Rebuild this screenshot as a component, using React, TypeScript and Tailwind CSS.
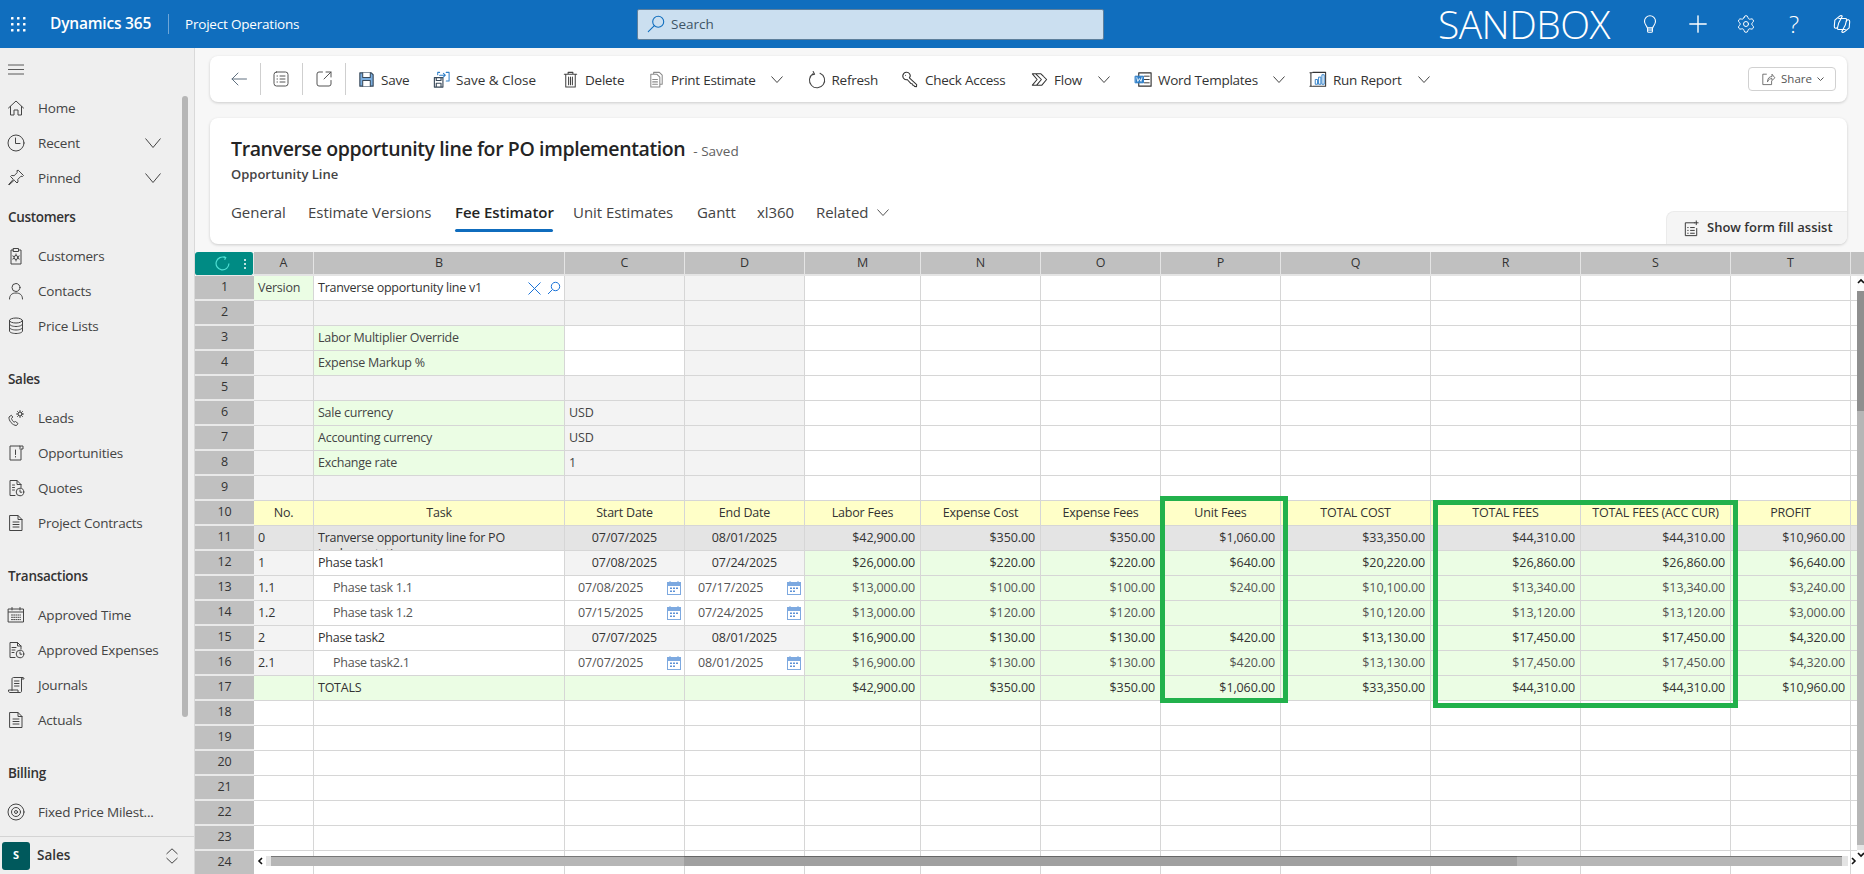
import type { ReactNode } from "react"
import { Plus, Settings } from "lucide-react"

const FONT = "font-['Open_Sans','Liberation_Sans',sans-serif]"

function I({ children, s = 20, cls = "" }: { children: ReactNode; s?: number; cls?: string }) {
    return (
        <svg width={s} height={s} viewBox="0 0 20 20" fill="none" stroke="currentColor" strokeWidth={1} strokeLinecap="round" strokeLinejoin="round" className={`shrink-0 ${cls}`}>
            {children}
        </svg>
    )
}

function Chev({ w = 12, cls = "" }: { w?: number; cls?: string }) {
    const h = Math.round(w * 0.6)
    return (
        <svg width={w} height={h} viewBox={`0 0 ${w} ${h}`} fill="none" stroke="currentColor" strokeWidth={1} className={`shrink-0 ${cls}`}>
            <path d={`M0.5 0.5L${w / 2} ${h - 0.5}L${w - 0.5} 0.5`} />
        </svg>
    )
}

const docLines = (
    <>
        <path d="M4 2.5h8l4 4v11H4z" />
        <path d="M12 2.5v4h4M7 9h6M7 11.5h6M7 14h6" />
    </>
)

const NAV_ICONS: Record<string, ReactNode> = {
    Home: <path d="M2.5 10 10 3l7.5 7M4.5 8.5V17H8v-5h4v5h3.500V8.500" />,
    Recent: (
        <>
            <circle cx="10" cy="10" r="8" />
            <path d="M9.5 5v5.5H14" />
        </>
    ),
    Pinned: <path d="M12.5 2.5 17.5 7.5l-1 1-1.500-.3-3.200 3.200.2 2.600-1 1-2.800-2.800L3 17l-.4-.4 4.700-5.300-2.800-2.800 1-1 2.600.2 3.200-3.200-.3-1.500z" />,
    Customers: (
        <>
            <path d="M7.5 4H5v14h10V4h-2.500M7.500 2.500h5v3h-5z" />
            <circle cx="10" cy="11.5" r="2" />
            <path d="M10 8v1.500M10 13.500V15M6.800 10l1.400.7M11.800 12.300l1.400.7M6.800 13l1.400-.7M11.800 10.700l1.400-.7" />
        </>
    ),
    Contacts: (
        <>
            <circle cx="10" cy="6.500" r="4" />
            <path d="M3.500 18c0-4 2.500-6 6.500-6s6.500 2 6.500 6" />
        </>
    ),
    "Price Lists": (
        <>
            <ellipse cx="10" cy="4.500" rx="6.500" ry="2.500" />
            <path d="M3.500 4.500V15c0 1.400 3 2.500 6.500 2.500s6.500-1.100 6.500-2.500V4.500M3.500 8c0 1.400 3 2.500 6.500 2.500S16.500 9.400 16.500 8M3.500 11.500c0 1.400 3 2.500 6.500 2.500s6.500-1.100 6.500-2.500" />
        </>
    ),
    Leads: (
        <>
            <path d="M5 7.500 3 9c-.5 3.500 3.500 8.500 7.500 8.500l1.500-2-2.500-2-1.500.7c-1-.7-2.200-2.400-2.500-3.700l1-1.200z" />
            <circle cx="14" cy="6" r="2" />
            <path d="M14 2.500V4M14 8v1.500M10.500 6H12M16 6h1.500M11.500 3.500l1 1M15.500 7.500l1 1M11.500 8.500l1-1M15.500 4.500l1-1" />
        </>
    ),
    Opportunities: <path d="M14 6V3H4v14h11V6h2V3h-3M9.500 7v4.500M9.500 13.500v.5" />,
    Quotes: (
        <>
            <path d="M9 17.500H4v-15h7l4 4v3M11 2.500v4h4M6.500 7h2M6.500 9.500h2M6.500 12h2" />
            <circle cx="14" cy="14" r="3.800" />
            <path d="M14 12v2.200h1.800" />
        </>
    ),
    "Project Contracts": docLines,
    "Approved Time": (
        <>
            <path d="M2.500 4h15v13h-15zM2.500 7h15M6 2.500V5M14 2.500V5" />
            <path strokeDasharray="1 1.200" d="M5.500 10h9M5.500 12.300h9M5.500 14.600h9" />
        </>
    ),
    "Approved Expenses": (
        <>
            <path d="M9 17.500H4v-15h7.500L15 6v3M11.500 2.500V6H15M6 7.500h4M6 10h3M6 12.500h2" />
            <circle cx="14" cy="14" r="3.800" />
            <path d="M14 12v2.200h1.800" />
        </>
    ),
    Journals: <path d="M6 15.500V4c0-1 .8-1.500 1.500-1.500H17c-.8 0-1.500.6-1.500 1.500v12.500c0 .6-.7 1-1.500 1H4c-1 0-1.500-.7-1.500-1.500v-1H12V17c0 .3.500.5 1 .5M17 2.500c.7 0 1 .5 1 1.500h-2.500M8.500 6H13M8.500 8.500H13M8.500 11H13" />,
    Actuals: docLines,
    "Fixed Price Milest...": (
        <>
            <circle cx="10" cy="10" r="8" />
            <circle cx="10" cy="10" r="4.500" />
            <circle cx="10" cy="10" r="1.500" />
        </>
    ),
}

const NAV: { heading?: string; mt?: string; items: string[] }[] = [
    { items: ["Home", "Recent", "Pinned"] },
    { heading: "Customers", mt: "mt-1", items: ["Customers", "Contacts", "Price Lists"] },
    { heading: "Sales", mt: "mt-[18px]", items: ["Leads", "Opportunities", "Quotes", "Project Contracts"] },
    { heading: "Transactions", mt: "mt-[18px]", items: ["Approved Time", "Approved Expenses", "Journals", "Actuals"] },
    { heading: "Billing", mt: "mt-[18px]", items: ["Fixed Price Milest..."] },
]

function TopBar() {
    return (
        <header className="flex items-center h-12 shrink-0 bg-[#106ebe] text-white">
            <svg width="16" height="16" viewBox="0 0 16 16" fill="white" className="ml-[10px] shrink-0">
                {[1, 7, 13].flatMap((y) => [1, 7, 13].map((x) => <rect key={`${x}-${y}`} x={x} y={y} width="2.5" height="2.5" rx="0.5" />))}
            </svg>
            <span className="ml-[24px] w-[102px] text-[15.5px] font-semibold tracking-[-0.2px]">Dynamics 365</span>
            <span className="ml-[16px] w-px h-5 bg-[#6ea6d8]" />
            <span className="ml-[16px] w-[452px] text-[13.5px] tracking-[-0.2px]">Project Operations</span>
            <div className="flex items-center w-[467px] h-[31px] bg-[#cbdff0] border border-[#5d7f9c] rounded-[2px] pl-[7px] gap-[4px] text-[#3d5466]">
                <I s={22} cls="text-[#106ebe]">
                    <circle cx="12" cy="8" r="5" />
                    <path d="M8.500 11.500 3 17" />
                </I>
                <span className="text-[13.5px]">Search</span>
            </div>
            <span className="ml-auto mr-[16px] text-[39px] font-light leading-[48px] tracking-[-0.5px]">SANDBOX</span>
            <div className="flex items-center -mr-[2px]">
                <span className="w-[48px] flex justify-center">
                    <I s={22}>
                        <path d="M7.500 13.500C7 11.500 5 10.500 5 7.500a5 5 0 0 1 10 0c0 3-2 4-2.500 6zM7.800 13.500v3c0 .6.500 1 1 1h2.400c.5 0 1-.4 1-1v-3M8 15.500h4" />
                    </I>
                </span>
                <span className="w-[48px] flex justify-center">
                    <Plus size={28} strokeWidth={1.2} />
                </span>
                <span className="w-[48px] flex justify-center">
                    <Settings size={20} strokeWidth={1.2} />
                </span>
                <span className="w-[48px] flex justify-center text-[24px] font-light leading-none">?</span>
                <span className="w-[48px] flex justify-center">
                    <I s={22}>
                        <path d="M7 3.500 3.500 6.500 3 12c-.2 2 2 2.500 3 1l1-4 3-5.500c.6-1-.7-1.200-1.500-1zM13 16.500l3.500-3L17 8c.2-2-2-2.500-3-1l-1 4-3 5.500c-.6 1 .7 1.200 1.500 1z" />
                        <path d="M7 5h6c1.500 0 1.500 1.500 1 2.500M13 15H7c-1.500 0-1.500-1.500-1-2" />
                    </I>
                </span>
            </div>
        </header>
    )
}

function Sidebar() {
    return (
        <aside className="relative flex flex-col w-[195px] shrink-0 bg-[#efefef] border-r border-[#d9d9d9] text-[#444444]">
            <div className="flex items-center h-[42.5px] shrink-0 pl-[8px] text-[#333333]">
                <svg width="16" height="11" viewBox="0 0 16 11" stroke="currentColor" strokeWidth="0.8" className="shrink-0">
                    <path d="M0 1h16M0 5.500h16M0 10h16" />
                </svg>
            </div>
            <nav className="flex-1 min-h-0 overflow-hidden">
                {NAV.map((s) => (
                    <div key={s.items[0]} className={s.mt}>
                        {s.heading && <div className="h-[35px] mb-1 pl-[8px] flex items-center text-[13.5px] font-semibold text-[#333333] tracking-[-0.3px]">{s.heading}</div>}
                        {s.items.map((it) => (
                            <div key={it} className="flex items-center h-[35px] pl-[6px] gap-[12px]">
                                <I>{NAV_ICONS[it]}</I>
                                <span className="text-[13.5px] tracking-[-0.2px] whitespace-nowrap">{it}</span>
                                {(it === "Recent" || it === "Pinned") && <Chev w={16} cls="absolute left-[145px]" />}
                            </div>
                        ))}
                    </div>
                ))}
            </nav>
            <div className="flex items-center h-[38px] shrink-0 border-t border-[#d4d4d4] pl-[2px]">
                <span className="w-[28px] h-[28px] rounded-[3px] bg-[#00595c] text-white text-[11px] font-bold flex items-center justify-center">S</span>
                <span className="ml-[7px] text-[13.5px] font-semibold text-[#333333]">Sales</span>
                <svg width="12" height="16" viewBox="0 0 12 16" fill="none" stroke="currentColor" strokeWidth="1" className="ml-auto mr-[16px] shrink-0">
                    <path d="M0.5 6 6 0.8 11.500 6M0.5 10 6 15.200 11.500 10" />
                </svg>
            </div>
            <div className="absolute left-[182px] top-[48px] w-[6px] h-[621px] rounded-full bg-[#b6b6b6]" />
        </aside>
    )
}

const TOOLS: { icon: ReactNode; label: string; w: string; chevron?: boolean; ml: string; track?: string }[] = [
    {
        label: "Save",
        w: "w-[28px]",
        ml: "ml-[11px]",
        icon: (
            <>
                <path d="M3 3h12l2 2v12H3z" fill="#7aaee0" stroke="#3a4a5a" strokeWidth="1.2" />
                <path d="M6 3v5h8V3M6 17v-6h8v6" fill="#fff" stroke="#3a4a5a" strokeWidth="1.1" />
            </>
        ),
    },
    {
        label: "Save & Close",
        w: "w-[80px]",
        ml: "ml-[22.5px]",
        track: "tracking-[0px]",
        icon: (
            <>
                <path d="M2.500 8h9v10h-9zM4.500 8v3h5V8M4.500 18v-4h5v4" stroke="#3a4a5a" strokeWidth="1.2" />
                <path d="M6 5V2.500h2M15 2.500h3v9h-3M8 5.500h6M12 3.500l2 2-2 2" stroke="#2f7fc8" strokeWidth="1.1" />
            </>
        ),
    },
    {
        label: "Delete",
        w: "w-[41px]",
        ml: "ml-[24.5px]",
        icon: <path d="M3.500 4.500h13M7.500 4.500v-2h5v2M5 4.500V18h10V4.500M8 7.500v8M10 7.500v8M12 7.500v8" stroke="#444" strokeWidth="1.1" />,
    },
    {
        label: "Print Estimate",
        w: "w-[84px]",
        ml: "ml-[20.5px]",
        chevron: true,
        icon: <path d="M7 4V2.500h6l3 3V15h-2.500M4 4.500h6.500l3 3V18H4zM6 10h5M6 12.500h5M6 15h5" stroke="#8a8a8a" strokeWidth="1.1" />,
    },
    {
        label: "Refresh",
        w: "w-[45px]",
        ml: "ml-[22px]",
        icon: <path d="M6.500 1.500 8 4.500 5.200 5.200M6.300 4a8 8 0 1 0 7.400-.6" stroke="#444" strokeWidth="1.1" />,
    },
    {
        label: "Check Access",
        w: "w-[83px]",
        ml: "ml-[24px]",
        icon: <path d="M3 3.500c1.500-1.500 4.500-1.500 6 .5 1 1.400 1 3-.2 4.200l7.700 7.300-.2 2-2-.2-1-1.300-1.300-.2-.2-1.300-1.300-.2L6.500 10c-1.500.5-3 0-4-1.500-.8-1.500-.6-3.800.5-5zM4.800 5.500v.1" stroke="#333" strokeWidth="1.1" />,
    },
    {
        label: "Flow",
        w: "w-[28px]",
        ml: "ml-[21.5px]",
        chevron: true,
        icon: <path d="M2.500 4h9l6 6-5 6h-10l5-6zM6 4l6 6-5 6M11.500 4 14 6.500" stroke="#333" strokeWidth="1.1" />,
    },
    {
        label: "Word Templates",
        w: "w-[99px]",
        ml: "ml-[21.5px]",
        chevron: true,
        icon: (
            <>
                <path d="M5 3h13v14H5z" stroke="#333" strokeWidth="1.2" />
                <path d="M11 6.500h5M11 10h5M11 13.500h5" stroke="#333" />
                <path d="M1.500 6.500H10v7H1.500z" fill="#2f7fc8" stroke="#2f7fc8" />
                <path d="M3 8l1 4 1.700-3 1.700 3 1-4" stroke="#fff" strokeWidth="0.9" />
            </>
        ),
    },
    {
        label: "Run Report",
        w: "w-[69px]",
        ml: "ml-[21.5px]",
        chevron: true,
        icon: (
            <>
                <path d="M4 2.500h13.500V17H4M2 3v14M1 3h2M1 17h2" stroke="#333" strokeWidth="1.1" />
                <path d="M7 10h2v5H7zM10.500 7.500h2V15h-2zM14 5h2v10h-2z" stroke="#2f7fc8" />
            </>
        ),
    },
]

function Seg({ children }: { children: ReactNode }) {
    return <span className="flex items-center justify-center w-[42.5px] h-[32px] border-r border-[#cfcfcf] text-[#555555]">{children}</span>
}

function CommandBar() {
    return (
        <div className="flex items-center h-[46px] ml-[15px] mr-[17px] mt-2 pl-[8px] rounded-lg bg-white shadow-[0_1px_3px_rgba(0,0,0,0.18)] text-[#333333]">
            <Seg>
                <I cls="text-[#607080]">
                    <path d="M17.500 10H3M9 4l-6 6 6 6" />
                </I>
            </Seg>
            <Seg>
                <I>
                    <rect x="3" y="3" width="14" height="14" rx="2.5" />
                    <path d="M6 7h.5M6 10h.5M6 13h.5M9 7h5M9 10h5M9 13h5" />
                </I>
            </Seg>
            <Seg>
                <I>
                    <path d="M8.500 3H5a2 2 0 0 0-2 2v10a2 2 0 0 0 2 2h10a2 2 0 0 0 2-2v-3.500M10 10l7-7M12 3h5v5" />
                </I>
            </Seg>
            {TOOLS.map((t) => (
                <div key={t.label} className={`flex items-center ${t.ml}`}>
                    <I s={19}>{t.icon}</I>
                    <span className={`ml-[5.5px] pt-[2px] text-[13.5px] whitespace-nowrap ${t.track ?? "tracking-[-0.25px]"} ${t.w}`}>{t.label}</span>
                    {t.chevron && <Chev cls="ml-[16px] mr-[2px] text-[#444444]" />}
                </div>
            ))}
            <div className="ml-auto mr-[11px] flex items-center justify-center gap-[5px] w-[88px] h-[24px] border border-[#d1d1d1] rounded text-[#555555]">
                <I s={16}>
                    <path d="M8 4H3.500v13h11v-4M9.500 13c0-4 2-6 5.500-6V4l3.500 4.500L15 12V9.500c-2.500 0-4.500 1-5.500 3.500z" />
                </I>
                <span className="text-[11.5px]">Share</span>
                <Chev w={7} />
            </div>
        </div>
    )
}

const TABS = [
    { label: "General", cls: "w-[55px]" },
    { label: "Estimate Versions", cls: "ml-[22px] w-[124px]" },
    { label: "Fee Estimator", cls: "ml-[23px] w-[98px] font-semibold text-[#242424]" },
    { label: "Unit Estimates", cls: "ml-[20px] w-[101px]" },
    { label: "Gantt", cls: "ml-[23px] w-[39px]" },
    { label: "xl360", cls: "ml-[21px] w-[37px]" },
    { label: "Related", cls: "ml-[22px] w-[53px]" },
]

function FormHeader() {
    return (
        <div className="relative h-[126px] ml-[15px] mr-[17px] mt-4 pl-[21px] rounded-lg bg-white shadow-[0_1px_3px_rgba(0,0,0,0.18)]">
            <div className="flex items-baseline pt-[17px] text-[#242424] whitespace-nowrap">
                <span className="text-[19.5px] font-semibold leading-[28px] tracking-[-0.38px]">Tranverse opportunity line for PO implementation</span>
                <span className="ml-2 text-[13.5px] text-[#616161]">- Saved</span>
            </div>
            <div className="mt-[2px] text-[13px] font-semibold leading-[18px] text-[#444444]">Opportunity Line</div>
            <div className="flex items-center mt-[18px] text-[15px] tracking-[-0.05px] text-[#444444] whitespace-nowrap">
                {TABS.map((t) => (
                    <span key={t.label} className={`relative h-[28px] leading-[22px] ${t.cls}`}>
                        {t.label}
                        {t.label === "Fee Estimator" && <span className="absolute left-0 right-0 bottom-[-3px] h-[3px] rounded bg-[#0f6cbd]" />}
                    </span>
                ))}
                <Chev cls="ml-[8px] mb-[6px] text-[#555555]" />
            </div>
            <div className="absolute right-0 bottom-0 flex items-center w-[181px] h-[33px] pl-[15px] gap-[6px] bg-[#f5f5f5] rounded-tl-lg rounded-br-lg border-l border-t border-[#ebebeb] text-[#333333]">
                <I s={19}>
                    <path d="M13 4H3.500v13.500h12V10M6 9h.5M6 12h.5M6 15h.5M9 9h4M9 12h4M9 15h4M15 2v4M13 4h4" />
                </I>
                <span className="text-[13px] font-semibold whitespace-nowrap">Show form fill assist</span>
            </div>
        </div>
    )
}

const G = "bg-[#f3f3f3]"
const L = "bg-[#ebfde4]"
const Y = "bg-[#ffffc8]"
const T = "bg-[#e4e4e4]"
const W = "bg-white"

const COLS = ["A", "B", "C", "D", "M", "N", "O", "P", "Q", "R", "S", "T"]
const HEADS = ["Labor Fees", "Expense Cost", "Expense Fees", "Unit Fees", "TOTAL COST", "TOTAL FEES", "TOTAL FEES (ACC CUR)", "PROFIT"]

const TASKS = [
    { row: 11, no: "0", task: "Tranverse opportunity line for PO implementation", start: "07/07/2025", end: "08/01/2025", kind: "total", money: ["$42,900.00", "$350.00", "$350.00", "$1,060.00", "$33,350.00", "$44,310.00", "$44,310.00", "$10,960.00"] },
    { row: 12, no: "1", task: "Phase task1", start: "07/08/2025", end: "07/24/2025", kind: "phase", money: ["$26,000.00", "$220.00", "$220.00", "$640.00", "$20,220.00", "$26,860.00", "$26,860.00", "$6,640.00"] },
    { row: 13, no: "1.1", task: "Phase task 1.1", start: "07/08/2025", end: "07/17/2025", kind: "leaf", money: ["$13,000.00", "$100.00", "$100.00", "$240.00", "$10,100.00", "$13,340.00", "$13,340.00", "$3,240.00"] },
    { row: 14, no: "1.2", task: "Phase task 1.2", start: "07/15/2025", end: "07/24/2025", kind: "leaf", money: ["$13,000.00", "$120.00", "$120.00", "", "$10,120.00", "$13,120.00", "$13,120.00", "$3,000.00"] },
    { row: 15, no: "2", task: "Phase task2", start: "07/07/2025", end: "08/01/2025", kind: "phase", money: ["$16,900.00", "$130.00", "$130.00", "$420.00", "$13,130.00", "$17,450.00", "$17,450.00", "$4,320.00"] },
    { row: 16, no: "2.1", task: "Phase task2.1", start: "07/07/2025", end: "08/01/2025", kind: "leaf", money: ["$16,900.00", "$130.00", "$130.00", "$420.00", "$13,130.00", "$17,450.00", "$17,450.00", "$4,320.00"] },
    { row: 17, no: "", task: "TOTALS", start: "", end: "", kind: "sum", money: ["$42,900.00", "$350.00", "$350.00", "$1,060.00", "$33,350.00", "$44,310.00", "$44,310.00", "$10,960.00"] },
]

function Cell({ bg = W, cls = "px-[4px]", children }: { bg?: string; cls?: string; children?: ReactNode }) {
    return <div className={`flex items-center min-w-0 overflow-hidden whitespace-nowrap border-r border-b border-[#d6d6d6] ${bg} ${cls}`}>{children}</div>
}

function CalendarIcon() {
    return (
        <svg width="14" height="14" viewBox="0 0 14 14" className="ml-auto shrink-0">
            <rect x="0.5" y="1.5" width="13" height="12" fill="#fff" stroke="#7da9e0" />
            <rect x="0.5" y="1.5" width="13" height="3" fill="#7da9e0" stroke="#7da9e0" />
            <path d="M3 0v2M11 0v2" stroke="#7da9e0" />
            <path d="M3 6.500h2V8H3zM6 6.500h2V8H6zM9 6.500h2V8H9zM3 9.500h2V11H3zM6 9.500h2V11H6z" fill="#5e92d6" />
        </svg>
    )
}

function RowHead({ n }: { n: number }) {
    return <div className="flex items-center justify-center bg-[#c0c0c0] border-b-2 border-[#e9e9e9] text-[#333333]">{n}</div>
}

function BlankU({ bg = W }: { bg?: string }) {
    return <div className={`border-b border-[#d6d6d6] ${bg}`} />
}

function TopRows() {
    const labels: Record<number, string> = { 3: "Labor Multiplier Override", 4: "Expense Markup %", 6: "Sale currency", 7: "Accounting currency", 8: "Exchange rate" }
    const values: Record<number, string> = { 6: "USD", 7: "USD", 8: "1" }
    return (
        <>
            {[1, 2, 3, 4, 5, 6, 7, 8, 9].map((r) => (
                <div key={r} className="contents">
                    <RowHead n={r} />
                    <Cell bg={r === 1 ? L : G} cls="pl-[4px] tracking-[-0.25px] text-[#444444]">{r === 1 && "Version"}</Cell>
                    {r === 1 ? (
                        <Cell cls="px-[4px] tracking-[-0.25px] text-[#333333]">
                            Tranverse opportunity line v1
                            <svg width="13" height="13" viewBox="0 0 13 13" fill="none" stroke="#1a73d8" className="ml-auto shrink-0">
                                <path d="M0.5 0.5l12 12M12.500 0.5l-12 12" />
                            </svg>
                            <svg width="14" height="14" viewBox="0 0 14 14" fill="none" stroke="#1a73d8" className="ml-[6px] mr-[-1px] shrink-0">
                                <circle cx="8.5" cy="5.5" r="4.2" />
                                <path d="M5.500 8.500 1 13" />
                            </svg>
                        </Cell>
                    ) : (
                        <Cell bg={labels[r] ? L : G} cls="px-[4px] tracking-[-0.25px] text-[#444444]">{labels[r]}</Cell>
                    )}
                    <Cell bg={r === 3 || r === 4 ? W : G} cls="px-[4px] text-[#444444]">{values[r]}</Cell>
                    <Cell bg={G} />
                    {Array.from({ length: 8 }).map((_, i) => <Cell key={i} />)}
                    <BlankU />
                </div>
            ))}
        </>
    )
}

function HeaderRow() {
    return (
        <>
            <RowHead n={10} />
            {["No.", "Task", "Start Date", "End Date", ...HEADS].map((h, i) => (
                <Cell key={h + i} bg={Y} cls="justify-center px-[4px] tracking-[-0.2px] text-[#333333]">{h}</Cell>
            ))}
            <BlankU bg={Y} />
        </>
    )
}

function TaskRow({ t }: { t: (typeof TASKS)[number] }) {
    const total = t.kind === "total"
    const sum = t.kind === "sum"
    const leaf = t.kind === "leaf"
    const rowBg = total ? T : sum ? L : null
    const ink = leaf ? "text-[#555555]" : "text-[#333333]"
    const dateCell = (d: string) => leaf ? (
        <Cell cls="pl-[13px] pr-[3px] text-[#555555]">
            {d}
            <CalendarIcon />
        </Cell>
    ) : (
        <Cell bg={rowBg ?? G} cls="justify-center text-[#333333]">{d}</Cell>
    )
    return (
        <>
            <RowHead n={t.row} />
            <Cell bg={rowBg ?? G} cls="px-[4px] text-[#333333]">{t.no}</Cell>
            {total ? (
                <div className={`${T} border-r border-b border-[#d6d6d6] overflow-hidden pl-[4px] pt-[4px] leading-[16px] tracking-[-0.25px] text-[#333333]`}>{t.task}</div>
            ) : (
                <Cell bg={rowBg ?? W} cls={`${leaf ? "pl-[19px]" : "pl-[4px]"} tracking-[-0.25px] ${ink}`}>{t.task}</Cell>
            )}
            {dateCell(t.start)}
            {dateCell(t.end)}
            {t.money.map((m, i) => (
                <Cell key={i} bg={rowBg ?? L} cls={`justify-end pr-[5px] ${ink}`}>{m}</Cell>
            ))}
            <BlankU bg={rowBg ?? L} />
        </>
    )
}

function Scrollbars() {
    return (
        <>
            <div className="absolute right-0 top-[24px] bottom-[15px] w-[7px] flex flex-col items-center bg-[#fbfbfb]">
                <svg width="8" height="6" viewBox="0 0 8 6" fill="none" stroke="#111" strokeWidth="1.6" className="mt-[2px] mb-[7px] shrink-0">
                    <path d="M1 5l3-3 3 3" />
                </svg>
                <div className="w-full h-[120px] shrink-0 bg-[#8f8f8f]" />
                <div className="w-full flex-1 bg-[#b6b6b6]" />
                <div className="w-full h-[5px] shrink-0 bg-[#e4e4e4]" />
                <svg width="8" height="6" viewBox="0 0 8 6" fill="none" stroke="#111" strokeWidth="1.6" className="mt-[2px] mb-[1px] shrink-0">
                    <path d="M1 1l3 3 3-3" />
                </svg>
            </div>
            <div className="absolute left-[59px] right-0 top-[604px] h-[10px] flex items-center">
                <svg width="6" height="8" viewBox="0 0 6 8" fill="none" stroke="#111" strokeWidth="1.6" className="ml-[3px] mr-[3px] shrink-0">
                    <path d="M5 1 2 4l3 3" />
                </svg>
                <div className="w-[5px] h-full shrink-0 bg-[#e4e4e4]" />
                <div className="w-[413px] h-full shrink-0 bg-[#b6b6b6] border-t border-[#777777]" />
                <div className="w-[833px] h-full shrink-0 bg-[#a0a0a0] border-t border-[#666666]" />
                <div className="w-[325px] h-full shrink-0 bg-[#b6b6b6] border-t border-[#777777]" />
                <div className="w-[6px] h-full shrink-0 bg-[#e4e4e4]" />
                <svg width="6" height="8" viewBox="0 0 6 8" fill="none" stroke="#111" strokeWidth="1.6" className="ml-[3px] shrink-0">
                    <path d="M1 1l3 3-3 3" />
                </svg>
            </div>
        </>
    )
}

function Sheet() {
    return (
        <div className="relative flex-1 min-h-0 mt-2 overflow-hidden">
            <div className="grid grid-cols-[59px_60px_251px_120px_120px_116px_120px_120px_120px_150px_150px_150px_120px_1fr] grid-rows-[24px_repeat(24,25px)] text-[12.5px] tracking-[-0.1px] bg-white">
                <div className="flex items-center justify-end gap-[14px] pr-[7px] rounded-[3px] bg-[#008b84] border-r border-b border-[#e9e9e9]">
                    <svg width="15" height="15" viewBox="0 0 14 14" fill="none" stroke="#4fe0d4" strokeWidth="1.1" className="shrink-0">
                        <path d="M9.500 1.500A6 6 0 1 0 13 7M8 .5l2 1-1 2" />
                    </svg>
                    <svg width="2" height="10" viewBox="0 0 2 10" fill="white" className="shrink-0">
                        <circle cx="1" cy="1" r="1" />
                        <circle cx="1" cy="5" r="1" />
                        <circle cx="1" cy="9" r="1" />
                    </svg>
                </div>
                {COLS.map((c) => (
                    <div key={c} className="flex items-center justify-center bg-[#c0c0c0] border-r border-b-2 border-[#e4e4e4] text-[#333333]">{c}</div>
                ))}
                <div className="bg-[#c0c0c0] border-b-2 border-[#e4e4e4]" />
                <TopRows />
                <HeaderRow />
                {TASKS.map((t) => <TaskRow key={t.row} t={t} />)}
                {[18, 19, 20, 21, 22, 23, 24].map((r) => (
                    <div key={r} className="contents">
                        <RowHead n={r} />
                        {Array.from({ length: 12 }).map((_, i) => <Cell key={i} />)}
                        <BlankU />
                    </div>
                ))}
            </div>
            <div className="absolute left-[965px] top-[244px] w-[128px] h-[207px] border-[5px] border-[#22b14c]" />
            <div className="absolute left-[1238px] top-[248px] w-[305px] h-[208px] border-[5px] border-[#22b14c]" />
            <Scrollbars />
        </div>
    )
}

export default function App() {
    return (
        <div className={`flex flex-col h-screen w-screen overflow-hidden bg-[#f7f7f7] ${FONT}`}>
            <TopBar />
            <div className="flex flex-1 min-h-0">
                <Sidebar />
                <main className="flex flex-col flex-1 min-w-0">
                    <CommandBar />
                    <FormHeader />
                    <Sheet />
                </main>
            </div>
        </div>
    )
}
